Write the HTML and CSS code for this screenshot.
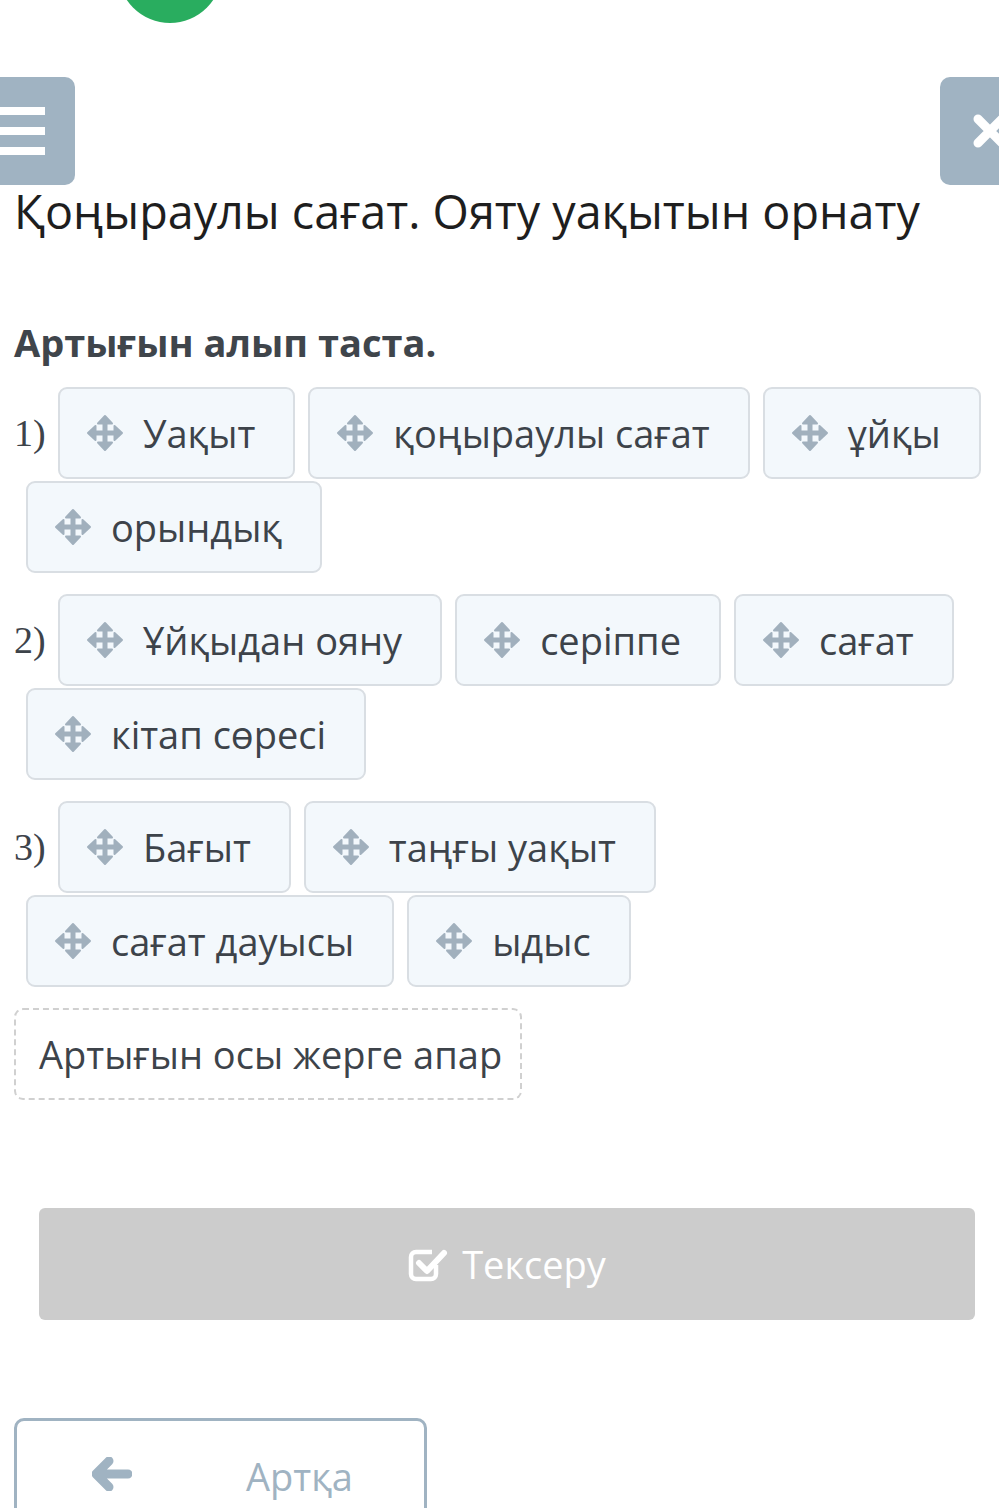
FILE: index.html
```html
<!DOCTYPE html>
<html lang="kk">
<head>
<meta charset="utf-8">
<title>Қоңыраулы сағат</title>
<link rel="stylesheet" href="styles.css">
</head>
<body>
<div class="page">
  <div class="logo"></div>
  <div class="toolbar">
    <div class="tbtn tbtn-menu">
      <span class="bar"></span><span class="bar"></span><span class="bar"></span>
    </div>
    <div class="tbtn tbtn-close">
      <svg width="40" height="40" viewBox="0 0 40 40"><path d="M8 8 L32 32 M32 8 L8 32" stroke="#fff" stroke-width="9" stroke-linecap="round"/></svg>
    </div>
  </div>
  <h1 class="title">Қоңыраулы сағат. Ояту уақытын орнату</h1>
  <div class="content">
    <h2 class="task">Артығын алып таста.</h2>

    <div class="row">
      <span class="num">1)</span>
      <div class="chip"><svg class="mv" viewBox="0 0 38 38"><use href="#move"/></svg><span>Уақыт</span></div>
      <div class="chip"><svg class="mv" viewBox="0 0 38 38"><use href="#move"/></svg><span>қоңыраулы сағат</span></div>
      <div class="chip"><svg class="mv" viewBox="0 0 38 38"><use href="#move"/></svg><span>ұйқы</span></div>
      <div class="chip"><svg class="mv" viewBox="0 0 38 38"><use href="#move"/></svg><span>орындық</span></div>
    </div>

    <div class="row">
      <span class="num">2)</span>
      <div class="chip"><svg class="mv" viewBox="0 0 38 38"><use href="#move"/></svg><span>Ұйқыдан ояну</span></div>
      <div class="chip"><svg class="mv" viewBox="0 0 38 38"><use href="#move"/></svg><span>серіппе</span></div>
      <div class="chip"><svg class="mv" viewBox="0 0 38 38"><use href="#move"/></svg><span>сағат</span></div>
      <div class="chip"><svg class="mv" viewBox="0 0 38 38"><use href="#move"/></svg><span>кітап сөресі</span></div>
    </div>

    <div class="row">
      <span class="num">3)</span>
      <div class="chip"><svg class="mv" viewBox="0 0 38 38"><use href="#move"/></svg><span>Бағыт</span></div>
      <div class="chip"><svg class="mv" viewBox="0 0 38 38"><use href="#move"/></svg><span>таңғы уақыт</span></div>
      <div class="chip"><svg class="mv" viewBox="0 0 38 38"><use href="#move"/></svg><span>сағат дауысы</span></div>
      <div class="chip"><svg class="mv" viewBox="0 0 38 38"><use href="#move"/></svg><span>ыдыс</span></div>
    </div>

    <div class="drop">Артығын осы жерге апар</div>
  </div>

  <div class="check">
    <svg class="chk" width="40" height="38" viewBox="0 0 40 38">
      <path d="M28 20 V29 A5 5 0 0 1 23 34 H8 A5 5 0 0 1 3 29 V12 A5 5 0 0 1 8 7 H24" fill="none" stroke="#fff" stroke-width="4.5" stroke-linejoin="round"/>
      <path d="M11 18 L19 26 L36 8" fill="none" stroke="#fff" stroke-width="6" stroke-linecap="round" stroke-linejoin="round"/>
    </svg>
    <span>Тексеру</span>
  </div>

  <div class="back">
    <svg class="arr" width="40" height="34" viewBox="0 0 40 34">
      <path d="M4 17 L17 4 M4 17 L17 30 M4 17 H36" fill="none" stroke="#a0b3c2" stroke-width="9" stroke-linecap="round" stroke-linejoin="round"/>
    </svg>
    <span>Артқа</span>
  </div>
</div>

<svg width="0" height="0" class="defs">
  <defs>
    <g id="move" fill="#a1b0bd" stroke="#a1b0bd" stroke-linejoin="round" stroke-width="2">
      <rect x="16.5" y="7" width="5" height="24" stroke="none"/>
      <rect x="7" y="16.5" width="24" height="5" stroke="none"/>
      <path d="M19 2 L26 9.5 H12 Z"/>
      <path d="M19 36 L26 28.5 H12 Z"/>
      <path d="M2 19 L9.5 12 V26 Z"/>
      <path d="M36 19 L28.5 12 V26 Z"/>
    </g>
  </defs>
</svg>
</body>
</html>
```

FILE: styles.css
```css
html, body {
  margin: 0;
  padding: 0;
  background: #ffffff;
}

body {
  font-family: "Open Sans", "Noto Sans", sans-serif;
  color: #3d434a;
  overflow: hidden;
}

.page {
  width: 999px;
  height: 1508px;
  overflow: hidden;
}

.defs {
  position: absolute;
}

.logo {
  width: 104px;
  height: 104px;
  border-radius: 50%;
  background: #29ad5f;
  margin: -81px 0 0 118px;
}

.toolbar {
  display: flex;
  justify-content: space-between;
  height: 103px;
  margin-top: 54px;
}

.tbtn {
  width: 108px;
  height: 108px;
  background: #a0b3c2;
  border-radius: 10px;
  display: flex;
  flex-direction: column;
  justify-content: center;
}

.tbtn-menu {
  margin-left: -33px;
  align-items: flex-end;
  gap: 12px;
  padding-right: 30px;
  box-sizing: border-box;
}

.bar {
  display: block;
  width: 60px;
  height: 8px;
  background: #fff;
}

.tbtn-close {
  margin-right: -49px;
  padding-left: 30px;
  box-sizing: border-box;
}

.title {
  margin: 0 0 0 14px;
  font-size: 46.7px;
  font-weight: 400;
  color: #1e1e1e;
  line-height: 1.362;
  white-space: nowrap;
}

.content {
  padding-left: 14px;
}

.task {
  margin: 73px 0 19px 0;
  font-size: 38px;
  font-weight: 700;
  line-height: 1.362;
  color: #3f454b;
}

.row {
  display: flex;
  flex-wrap: wrap;
  align-items: center;
  row-gap: 2px;
  margin-bottom: 21px;
}

.num {
  font-family: "Liberation Serif", "Times New Roman", serif;
  font-size: 38px;
  width: 32px;
  color: #3d434a;
}

.chip {
  box-sizing: border-box;
  height: 92px;
  margin-left: 12px;
  margin-right: 1px;
  padding: 0 38px 0 26px;
  display: flex;
  align-items: center;
  gap: 19px;
  background: #f3f8fc;
  border: 2px solid #d9dee3;
  border-radius: 9px;
  font-size: 38px;
  color: #3d434a;
  white-space: nowrap;
}

.mv {
  width: 38px;
  height: 38px;
  flex: none;
}

.drop {
  box-sizing: border-box;
  width: 508px;
  height: 92px;
  border: 2px dashed #d0d0d0;
  border-radius: 9px;
  display: flex;
  align-items: center;
  padding-left: 23px;
  font-size: 38px;
  color: #3d434a;
  white-space: nowrap;
}

.check {
  box-sizing: border-box;
  margin: 108px 0 0 39px;
  width: 936px;
  height: 112px;
  background: #cccccc;
  border-radius: 6px;
  display: flex;
  align-items: center;
  justify-content: center;
  gap: 14px;
  color: #ffffff;
  font-size: 38px;
}

.back {
  box-sizing: border-box;
  margin: 98px 0 0 14px;
  width: 413px;
  height: 112px;
  border: 3px solid #a0b3c2;
  border-radius: 10px;
  display: flex;
  align-items: center;
  padding-left: 75px;
  gap: 114px;
  color: #a0b3c2;
  font-size: 38px;
}

.back span {
  margin-top: 4px;
}
```
